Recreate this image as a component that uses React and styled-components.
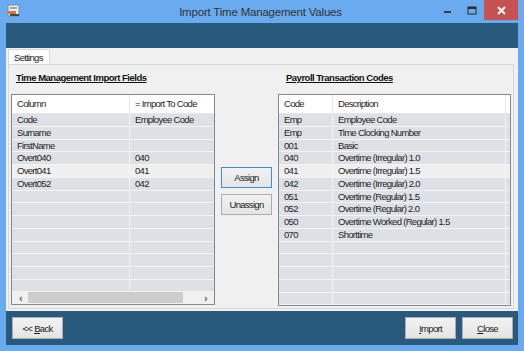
import React from "react"
import styled, { createGlobalStyle } from "styled-components"

const GlobalStyle = createGlobalStyle`
  html, body {
    margin: 0;
    padding: 0;
    width: 524px;
    height: 351px;
    overflow: hidden;
  }
  body {
    font-family: "Liberation Sans", Arial, sans-serif;
    font-size: 9.5px;
    letter-spacing: -0.7px;
    color: #1a1a1a;
  }
`

const Window = styled.div`
  width: 524px;
  height: 351px;
  box-sizing: border-box;
  background: #6aaaee;
  padding: 0 6px 6px 6px;
  display: flex;
  flex-direction: column;
`

const TitleBar = styled.div`
  height: 23px;
  display: flex;
  align-items: flex-start;
`

const AppIcon = styled.div`
  width: 14px;
  height: 14px;
  margin: 4px 0 0 1px;
`

const Title = styled.div`
  flex: 1;
  text-align: center;
  font-size: 11.5px;
  letter-spacing: -0.2px;
  line-height: 24px;
  color: #333;
  padding-left: 64px;
`

const Controls = styled.div`
  display: flex;
  align-items: flex-start;
  height: 20px;
`

const CtrlButton = styled.div`
  width: ${p => p.$w}px;
  height: 20px;
  display: flex;
  align-items: center;
  justify-content: center;
  background: ${p => p.$bg || "transparent"};
`

const Band = styled.div`
  background: #285a7e;
  height: ${p => p.$h}px;
  flex-shrink: 0;
  display: flex;
  align-items: center;
  justify-content: space-between;
  padding: 0 5px 0 6px;
  box-sizing: border-box;
`

const TabArea = styled.div`
  flex: 1;
  background: #f0f0f0;
  display: flex;
  flex-direction: column;
  padding: 1px 4px 2px 2px;
`

const TabStrip = styled.div`
  display: flex;
  height: 15px;
`

const Tab = styled.div`
  background: #ffffff;
  border: 1px solid #d9d9d9;
  border-bottom: none;
  padding: 0 6px 0 5px;
  line-height: 15px;
  color: #222;
`

const TabPage = styled.div`
  flex: 1;
  border: 1px solid #d9d9d9;
  padding: 0 1px 0 2px;
  display: grid;
  grid-template-columns: 204px 51px 233px;
  grid-template-rows: 29px 212px;
  column-gap: 6px;
`

const SectionLabel = styled.div`
  font-weight: bold;
  text-decoration: underline;
  letter-spacing: -0.5px;
  color: #111;
  padding-top: 7px;
  padding-left: ${p => p.$indent}px;
`

const GridBox = styled.div`
  border: 1px solid #828790;
  background: #dde1e6;
  display: flex;
  flex-direction: column;
  overflow: hidden;
  height: ${p => p.$h}px;
  box-sizing: border-box;
`

const GridBody = styled.div`
  flex: 1;
  overflow: hidden;
`

const Row = styled.div`
  display: grid;
  grid-template-columns: ${p => p.$cols};
  height: ${p => (p.$header ? 19 : 12.75)}px;
  background: ${p => (p.$header ? "#ffffff" : p.$light ? "#efefef" : "#dde1e6")};
  border-bottom: 1px solid ${p => (p.$header ? "#e6e6e6" : "#f3f4f6")};
  box-sizing: border-box;
`

const Cell = styled.div`
  padding-left: 5px;
  border-right: 1px solid ${p => (p.$header ? "#e6e6e6" : "#f3f4f6")};
  line-height: ${p => (p.$header ? 18 : 12)}px;
  white-space: nowrap;
  overflow: hidden;
  color: #1e1e1e;
`

const HScroll = styled.div`
  height: 13px;
  flex-shrink: 0;
  background: #f0f0f0;
  display: flex;
  align-items: center;
  padding: 0 3px;
  gap: 2px;
`

const Arrow = styled.div`
  width: 11px;
  font-size: 11px;
  font-weight: bold;
  color: #606060;
  text-align: center;
  line-height: 12px;
`

const Thumb = styled.div`
  height: 11px;
  background: #cdcdcd;
  width: 155px;
`

const Track = styled.div`
  flex: 1;
  display: flex;
`

const ButtonCol = styled.div`
  display: flex;
  flex-direction: column;
  gap: 6px;
  padding-top: 73px;
`

const Button = styled.button`
  width: 51px;
  height: ${p => p.$h || 21}px;
  box-sizing: border-box;
  border: 1px solid ${p => (p.$focus ? "#3d8ee0" : "#adadad")};
  background: linear-gradient(#f2f2f2, #e4e4e4);
  font-family: inherit;
  font-size: inherit;
  letter-spacing: inherit;
  color: #1a1a1a;
  padding: 0;
  cursor: default;
`

const ButtonGroup = styled.div`
  display: flex;
  gap: 6px;
`

const IconSvg = () => (
  <svg width="14" height="14" viewBox="0 0 14 14">
    <rect x="1" y="1" width="11" height="11" rx="1" fill="#e8eef3" stroke="#7d8a96" />
    <rect x="3" y="3" width="7" height="2" fill="#9aa7b3" />
    <rect x="1" y="7" width="8" height="3" fill="#e8731c" />
    <rect x="3" y="10" width="9" height="2" fill="#3d4a56" />
  </svg>
)

const leftCols = "118px 110px"
const rightCols = "54px 173px 6px"

const leftRows = [
  ["Code", "Employee Code"],
  ["Surname", ""],
  ["FirstName", ""],
  ["Overt040", "040"],
  ["Overt041", "041", true],
  ["Overt052", "042"],
]

const rightRows = [
  ["Emp", "Employee Code"],
  ["Emp", "Time Clocking Number"],
  ["001", "Basic"],
  ["040", "Overtime (Irregular) 1.0"],
  ["041", "Overtime (Irregular) 1.5", true],
  ["042", "Overtime (Irregular) 2.0"],
  ["051", "Overtime (Regular) 1.5"],
  ["052", "Overtime (Regular) 2.0"],
  ["050", "Overtime Worked (Regular) 1.5"],
  ["070", "Shorttime"],
]

const pad = (rows, n, width) => {
  const out = [...rows]
  while (out.length < n) out.push(Array(width).fill(""))
  return out
}

const App = () => {
  return (
    <Window>
      <GlobalStyle />
      <TitleBar>
        <AppIcon><IconSvg /></AppIcon>
        <Title>Import Time Management Values</Title>
        <Controls>
          <CtrlButton $w={24}>
            <svg width="8" height="8" viewBox="0 0 8 8"><rect x="0" y="5" width="7" height="2" fill="#3a3a3a" /></svg>
          </CtrlButton>
          <CtrlButton $w={24}>
            <svg width="10" height="9" viewBox="0 0 10 9"><rect x="1" y="1" width="8" height="7" fill="none" stroke="#2a2a2a" /><rect x="1" y="1" width="8" height="2" fill="#2a2a2a" /></svg>
          </CtrlButton>
          <CtrlButton $w={34} $bg="#c75050">
            <svg width="9" height="9" viewBox="0 0 9 9"><path d="M1 1 L8 8 M8 1 L1 8" stroke="#fff" strokeWidth="2" /></svg>
          </CtrlButton>
        </Controls>
      </TitleBar>

      <Band $h={25} />

      <TabArea>
        <TabStrip>
          <Tab>Settings</Tab>
        </TabStrip>
        <TabPage>
          <SectionLabel $indent={5}>Time Management Import Fields</SectionLabel>
          <div />
          <SectionLabel $indent={8}>Payroll Transaction Codes</SectionLabel>

          <GridBox $h={211}>
            <Row $header $cols={leftCols}>
              <Cell $header>Column</Cell>
              <Cell $header>= Import To Code</Cell>
            </Row>
            <GridBody>
              {pad(leftRows, 14, 2).map((r, i) => (
                <Row key={i} $cols={leftCols} $light={r[2] === true}>
                  <Cell>{r[0]}</Cell>
                  <Cell>{r[1]}</Cell>
                </Row>
              ))}
            </GridBody>
            <HScroll>
              <Arrow>&lsaquo;</Arrow>
              <Track><Thumb /></Track>
              <Arrow>&rsaquo;</Arrow>
            </HScroll>
          </GridBox>

          <ButtonCol>
            <Button $focus>Assign</Button>
            <Button>Unassign</Button>
          </ButtonCol>

          <GridBox $h={212}>
            <Row $header $cols={rightCols}>
              <Cell $header>Code</Cell>
              <Cell $header>Description</Cell>
              <Cell $header />
            </Row>
            <GridBody>
              {pad(rightRows, 16, 2).map((r, i) => (
                <Row key={i} $cols={rightCols} $light={r[2] === true}>
                  <Cell>{r[0]}</Cell>
                  <Cell>{r[1]}</Cell>
                  <Cell />
                </Row>
              ))}
            </GridBody>
          </GridBox>
        </TabPage>
      </TabArea>

      <Band $h={34}>
        <Button $h={22}>&lt;&lt; <u>B</u>ack</Button>
        <ButtonGroup>
          <Button $h={22}><u>I</u>mport</Button>
          <Button $h={22}><u>C</u>lose</Button>
        </ButtonGroup>
      </Band>
    </Window>
  )
}

export default App
